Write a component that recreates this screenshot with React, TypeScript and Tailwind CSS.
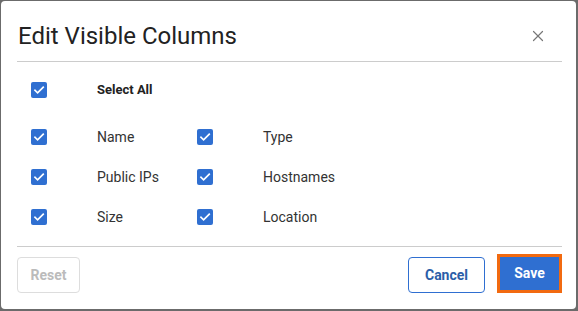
import { X } from "lucide-react";

const columns = [
  { label: "Name", checked: true },
  { label: "Type", checked: true },
  { label: "Public IPs", checked: true },
  { label: "Hostnames", checked: true },
  { label: "Size", checked: true },
  { label: "Location", checked: true },
];

function Checkbox({ checked }: { checked: boolean }) {
  return (
    <span className="flex h-4 w-4 shrink-0 items-center justify-center rounded-[2px] bg-[#2f6fd1]">
      {checked && (
        <svg viewBox="0 0 16 16" className="h-4 w-4" fill="none">
          <path d="M4 8.3l2.6 2.6L12.2 5.3" stroke="white" strokeWidth="1.7" strokeLinecap="square" />
        </svg>
      )}
    </span>
  );
}

export default function App() {
  return (
    <div className="h-[311px] w-[578px] overflow-hidden bg-[#6b6b6b] pl-px pt-px" style={{ fontFamily: "Roboto, sans-serif" }}>
      <div className="flex h-[308px] w-[575px] flex-col rounded-[4px] bg-white pl-4 pr-[14px]">
        {/* Header */}
        <div className="flex h-[61px] shrink-0 items-center justify-between border-b border-[#cccccc] pl-px pt-[9px]">
          <h2 className="text-[24px] leading-none text-[#222222]">Edit Visible Columns</h2>
          <button className="mr-[15px] text-[#777777]">
            <X size={18} strokeWidth={1.6} />
          </button>
        </div>

        {/* Body */}
        <div className="flex-1 border-b border-[#cccccc] px-[14px] pt-[20px]">
          <div className="flex h-4 items-center">
            <Checkbox checked />
            <span className="ml-[50px] text-[13px] font-bold text-[#222222]">Select All</span>
          </div>
          <div className="mt-[31px] grid grid-cols-[166px_166px] gap-y-[24px]">
            {columns.map((col) => (
              <div key={col.label} className="flex h-4 items-center">
                <Checkbox checked={col.checked} />
                <span className="ml-[50px] text-[14px] text-[#333333]">{col.label}</span>
              </div>
            ))}
          </div>
        </div>

        {/* Footer */}
        <div className="flex h-[62px] shrink-0 items-start justify-between pt-[10px]">
          <button className="h-[36px] w-[63px] rounded-[4px] border border-[#dddddd] text-[14px] font-bold text-[#bbbbbb]">
            Reset
          </button>
          <div className="flex items-start gap-[12px]">
            <button className="h-[36px] w-[77px] rounded-[4px] border border-[#2f6fd1] text-[14px] font-bold text-[#2b5ea8]">
              Cancel
            </button>
            <button className="-mt-[3px] h-[39px] w-[65px] border-[3px] border-[#f26a10] bg-[#2f6fd1] text-[14px] font-bold text-white">
              Save
            </button>
          </div>
        </div>
      </div>
    </div>
  );
}
